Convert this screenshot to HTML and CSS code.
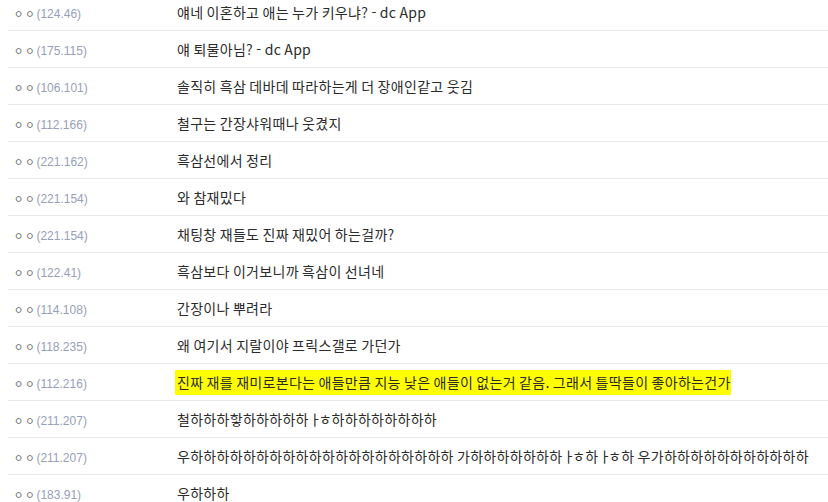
FILE: index.html
```html
<!DOCTYPE html>
<html lang="ko">
<head>
<meta charset="utf-8">
<link rel="stylesheet" href="styles.css">
</head>
<body>
<ul class="cmt-list">
  <li class="cmt"><div class="who"><span class="nick">ㅇㅇ</span><span class="ip">(124.46)</span></div><p class="txt">얘네 이혼하고 애는 누가 키우냐? - dc App</p></li>
  <li class="cmt"><div class="who"><span class="nick">ㅇㅇ</span><span class="ip">(175.115)</span></div><p class="txt">얘 퇴물아님? - dc App</p></li>
  <li class="cmt"><div class="who"><span class="nick">ㅇㅇ</span><span class="ip">(106.101)</span></div><p class="txt">솔직히 흑삼 데바데 따라하는게 더 장애인같고 웃김</p></li>
  <li class="cmt"><div class="who"><span class="nick">ㅇㅇ</span><span class="ip">(112.166)</span></div><p class="txt">철구는 간장샤워때나 웃겼지</p></li>
  <li class="cmt"><div class="who"><span class="nick">ㅇㅇ</span><span class="ip">(221.162)</span></div><p class="txt">흑삼선에서 정리</p></li>
  <li class="cmt"><div class="who"><span class="nick">ㅇㅇ</span><span class="ip">(221.154)</span></div><p class="txt">와 참재밌다</p></li>
  <li class="cmt"><div class="who"><span class="nick">ㅇㅇ</span><span class="ip">(221.154)</span></div><p class="txt">채팅창 재들도 진짜 재밌어 하는걸까?</p></li>
  <li class="cmt"><div class="who"><span class="nick">ㅇㅇ</span><span class="ip">(122.41)</span></div><p class="txt">흑삼보다 이거보니까 흑삼이 선녀네</p></li>
  <li class="cmt"><div class="who"><span class="nick">ㅇㅇ</span><span class="ip">(114.108)</span></div><p class="txt">간장이나 뿌려라</p></li>
  <li class="cmt"><div class="who"><span class="nick">ㅇㅇ</span><span class="ip">(118.235)</span></div><p class="txt">왜 여기서 지랄이야 프릭스갤로 가던가</p></li>
  <li class="cmt"><div class="who"><span class="nick">ㅇㅇ</span><span class="ip">(112.216)</span></div><p class="txt"><mark class="hl">진짜 재를 재미로본다는 애들만큼 지능 낮은 애들이 없는거 같음. 그래서 틀딱들이 좋아하는건가</mark></p></li>
  <li class="cmt"><div class="who"><span class="nick">ㅇㅇ</span><span class="ip">(211.207)</span></div><p class="txt">철하하하핳하하하하하<span class="jamo">ㅏㅎ</span>하하하하하하하하</p></li>
  <li class="cmt"><div class="who"><span class="nick">ㅇㅇ</span><span class="ip">(211.207)</span></div><p class="txt">우하하하하하하하하하하하하하하하하하하하하 가하하하하하하하<span class="jamo">ㅏㅎ</span>하<span class="jamo">ㅏㅎ</span>하 우가하하하하하하하하하하하</p></li>
  <li class="cmt"><div class="who"><span class="nick">ㅇㅇ</span><span class="ip">(183.91)</span></div><p class="txt">우하하하</p></li>
</ul>
</body>
</html>
```
FILE: styles.css
```css
html, body {
  margin: 0;
  padding: 0;
  background: #fff;
  overflow: hidden;
}
body {
  font-family: "Noto Sans CJK KR", "Noto Sans", sans-serif;
  color: #333;
}
.cmt-list {
  list-style: none;
  margin: -7px 0 0 8px;
  padding: 0;
}
.cmt {
  display: flex;
  align-items: center;
  height: 36px;
  border-top: 1px solid #eaeaea;
}
.who {
  width: 167px;
  padding-left: 6px;
  box-sizing: border-box;
  font-size: 12px;
  white-space: nowrap;
}
.nick {
  color: #666;
  font-size: 10px;
  letter-spacing: 2px;
}
.ip {
  color: #97a0b9;
  font-family: "Liberation Sans", sans-serif;
  font-size: 12px;
}
.txt {
  margin: 0 0 0 2px;
  font-size: 14px;
  letter-spacing: 0.3px;
  word-spacing: -1px;
  white-space: nowrap;
  color: #2b2b2b;
}
.jamo {
  letter-spacing: -3px;
  margin-right: 3px;
}
.hl {
  background: #ffff00;
  color: #2b2b2b;
  padding: 2px 0 3px 2px;
  margin-left: -2px;
}
```
